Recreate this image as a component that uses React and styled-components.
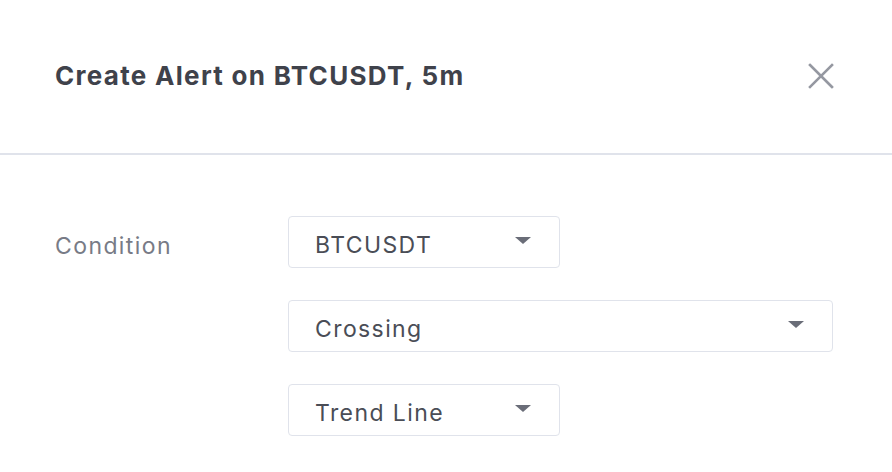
import React from "react";
import styled, { createGlobalStyle } from "styled-components";

const GlobalStyle = createGlobalStyle`
  html, body {
    margin: 0;
    padding: 0;
    background: #ffffff;
  }
  body {
    font-family: Inter, "Noto Sans", "Liberation Sans", sans-serif;
    -webkit-font-smoothing: antialiased;
  }
`;

const Dialog = styled.div`
  width: 892px;
  height: 472px;
  background: #ffffff;
  display: flex;
  flex-direction: column;
  overflow: hidden;
`;

const Header = styled.div`
  height: 155px;
  box-sizing: border-box;
  padding: 0 58px 2px 55px;
  display: flex;
  align-items: center;
  justify-content: space-between;
  border-bottom: 2px solid #e0e3eb;
  flex-shrink: 0;
`;

const Title = styled.h1`
  margin: 0;
  font-size: 26px;
  font-weight: 700;
  color: #3f424b;
  letter-spacing: 1.3px;
`;

const CloseButton = styled.button`
  width: 26px;
  height: 26px;
  padding: 0;
  border: none;
  background: transparent;
  display: flex;
  align-items: center;
  justify-content: center;
  cursor: pointer;
  color: #9598a1;
`;

const Body = styled.div`
  padding: 61px 59px 0 55px;
  display: grid;
  grid-template-columns: 233px 1fr;
  align-items: start;
`;

const Label = styled.div`
  height: 52px;
  display: flex;
  align-items: center;
  padding-top: 7px;
  box-sizing: border-box;
  font-size: 23px;
  letter-spacing: 1.4px;
  color: #787b86;
`;

const Fields = styled.div`
  display: flex;
  flex-direction: column;
  gap: 32px;
`;

const Select = styled.div`
  width: ${(p) => (p.$wide ? "545px" : "272px")};
  height: 52px;
  box-sizing: border-box;
  border: 1px solid #e0e3eb;
  border-radius: 4px;
  padding: 6px 28px 0 26px;
  display: flex;
  align-items: center;
  justify-content: space-between;
  font-size: 23px;
  letter-spacing: 1.4px;
  color: #4a4d56;
  background: #ffffff;
`;

const Caret = styled.span`
  width: 0;
  height: 0;
  border-left: 8px solid transparent;
  border-right: 8px solid transparent;
  border-top: 7px solid #6a6d78;
  margin-top: -10px;
`;

function CloseIcon() {
  return (
    <svg width="26" height="26" viewBox="0 0 26 26" fill="none">
      <path
        d="M2 2 L24 24 M24 2 L2 24"
        stroke="currentColor"
        strokeWidth="2.6"
        strokeLinecap="square"
      />
    </svg>
  );
}

function Dropdown({ value, wide }) {
  return (
    <Select $wide={wide}>
      <span>{value}</span>
      <Caret />
    </Select>
  );
}

export default function App() {
  return (
    <>
      <GlobalStyle />
      <Dialog>
        <Header>
          <Title>Create Alert on BTCUSDT, 5m</Title>
          <CloseButton aria-label="Close">
            <CloseIcon />
          </CloseButton>
        </Header>
        <Body>
          <Label>Condition</Label>
          <Fields>
            <Dropdown value="BTCUSDT" />
            <Dropdown value="Crossing" wide />
            <Dropdown value="Trend Line" />
          </Fields>
        </Body>
      </Dialog>
    </>
  );
}
